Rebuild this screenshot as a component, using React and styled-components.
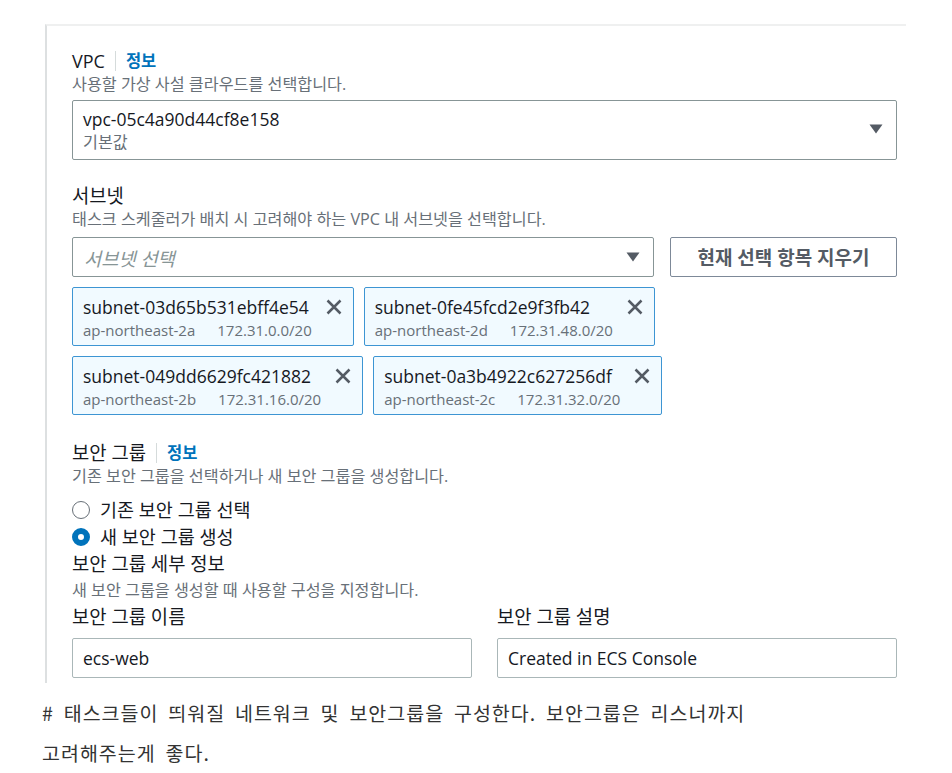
import React from 'react';
import styled, { createGlobalStyle } from 'styled-components';

const GlobalStyle = createGlobalStyle`
  body {
    margin: 0;
    background: #ffffff;
    font-family: "Open Sans", "Noto Sans CJK KR", sans-serif;
    color: #16191f;
  }
`;

const subnets = [
  { id: 'subnet-03d65b531ebff4e54', az: 'ap-northeast-2a', cidr: '172.31.0.0/20' },
  { id: 'subnet-0fe45fcd2e9f3fb42', az: 'ap-northeast-2d', cidr: '172.31.48.0/20' },
  { id: 'subnet-049dd6629fc421882', az: 'ap-northeast-2b', cidr: '172.31.16.0/20' },
  { id: 'subnet-0a3b4922c627256df', az: 'ap-northeast-2c', cidr: '172.31.32.0/20' },
];

function Caret() {
  return (
    <CaretIcon width="14" height="10" viewBox="0 0 14 10">
      <path d="M0.5 0.5 H13.5 L7 9.5 Z" fill="#545b64" />
    </CaretIcon>
  );
}

function Dismiss() {
  return (
    <DismissIcon width="16" height="16" viewBox="0 0 16 16">
      <path d="M1.5 1.5 L14.5 14.5 M14.5 1.5 L1.5 14.5" stroke="#545b64" strokeWidth="2.5" fill="none" />
    </DismissIcon>
  );
}

export default function App() {
  return (
    <Page>
      <GlobalStyle />
      <Panel>
        <Field>
          <LabelRow>
            <Label $latin>VPC</Label>
            <InfoLink>정보</InfoLink>
          </LabelRow>
          <Desc>사용할 가상 사설 클라우드를 선택합니다.</Desc>
          <SelectBox $tall $gap={5}>
            <SelectValue>
              <ValueText>vpc-05c4a90d44cf8e158</ValueText>
              <ValueSub>기본값</ValueSub>
            </SelectValue>
            <Caret />
          </SelectBox>
        </Field>

        <Field $gap={24}>
          <LabelRow>
            <Label>서브넷</Label>
          </LabelRow>
          <Desc>태스크 스케줄러가 배치 시 고려해야 하는 VPC 내 서브넷을 선택합니다.</Desc>
          <SelectRow>
            <SelectBox>
              <Placeholder>서브넷 선택</Placeholder>
              <Caret />
            </SelectBox>
            <ClearButton>현재 선택 항목 지우기</ClearButton>
          </SelectRow>
          <TokenList>
            {subnets.map(s => (
              <Token key={s.id}>
                <TokenBody>
                  <TokenId>{s.id}</TokenId>
                  <TokenMeta>
                    <span>{s.az}</span>
                    <span>{s.cidr}</span>
                  </TokenMeta>
                </TokenBody>
                <Dismiss />
              </Token>
            ))}
          </TokenList>
        </Field>

        <Field $gap={26}>
          <LabelRow>
            <Label>보안 그룹</Label>
            <InfoLink>정보</InfoLink>
          </LabelRow>
          <Desc>기존 보안 그룹을 선택하거나 새 보안 그룹을 생성합니다.</Desc>
          <RadioGroup>
            <RadioRow>
              <RadioCircle />
              <RadioText>기존 보안 그룹 선택</RadioText>
            </RadioRow>
            <RadioRow>
              <RadioCircle $checked />
              <RadioText>새 보안 그룹 생성</RadioText>
            </RadioRow>
          </RadioGroup>
          <SubHeading>보안 그룹 세부 정보</SubHeading>
          <Desc $gap={3}>새 보안 그룹을 생성할 때 사용할 구성을 지정합니다.</Desc>
          <Columns>
            <Column>
              <Label>보안 그룹 이름</Label>
              <TextInput>ecs-web</TextInput>
            </Column>
            <Column>
              <Label>보안 그룹 설명</Label>
              <TextInput>Created in ECS Console</TextInput>
            </Column>
          </Columns>
        </Field>
      </Panel>

      <Note>
        # 태스크들이 띄워질 네트워크 및 보안그룹을 구성한다. 보안그룹은 리스너까지
        <br />
        고려해주는게 좋다.
      </Note>
    </Page>
  );
}

const Page = styled.div`
  width: 952px;
  padding-top: 24px;
`;

/** panel with the light top and left rule */
const Panel = styled.section`
  box-sizing: border-box;
  width: 861px;
  margin-left: 45px;
  border-top: 2px solid #eff0f0;
  border-left: 2px solid #dde0e1;
  padding: 23px 9px 5px 25px;
`;

const Field = styled.div`
  display: flex;
  flex-direction: column;
  margin-top: ${p => p.$gap || 0}px;
`;

const LabelRow = styled.div`
  display: flex;
  align-items: center;
  height: 24px;
`;

const Label = styled.div`
  font-size: ${p => (p.$latin ? 18 : 18.8)}px;
  line-height: 24px;
  color: #16191f;
`;

const InfoLink = styled.a`
  margin-left: 10px;
  padding-left: 10px;
  border-left: 1px solid #d5dbdb;
  font-size: 16.5px;
  line-height: 20px;
  font-weight: 700;
  color: #0073bb;
`;

const Desc = styled.div`
  margin-top: ${p => p.$gap || 0}px;
  font-size: 16.2px;
  line-height: 22px;
  color: #687078;
`;

const SelectBox = styled.div`
  box-sizing: border-box;
  flex: 1;
  display: flex;
  align-items: center;
  justify-content: space-between;
  height: ${p => (p.$tall ? 60 : 40)}px;
  margin-top: ${p => p.$gap || 0}px;
  padding: ${p => (p.$tall ? '5px 13px 7px 10px' : '0 13px 0 11px')};
  border: 1px solid #879596;
  border-radius: 2px;
  background: #ffffff;
`;

const SelectValue = styled.div`
  display: flex;
  flex-direction: column;
  align-self: stretch;
`;

const ValueText = styled.div`
  font-size: 17.5px;
  line-height: 26px;
  color: #16191f;
`;

const ValueSub = styled.div`
  font-size: 16.2px;
  line-height: 20px;
  color: #687078;
`;

const Placeholder = styled.div`
  font-size: 18.7px;
  font-style: italic;
  color: #879596;
`;

const CaretIcon = styled.svg`
  display: block;
  flex-shrink: 0;
`;

const SelectRow = styled.div`
  display: flex;
  gap: 16px;
  margin-top: 7px;
`;

const ClearButton = styled.button`
  box-sizing: border-box;
  width: 227px;
  height: 40px;
  border: 1px solid #7d8998;
  border-radius: 2px;
  background: #ffffff;
  font-family: "Open Sans", "Noto Sans CJK KR", sans-serif;
  font-size: 19px;
  font-weight: 700;
  color: #545b64;
  padding: 0;
`;

const TokenList = styled.div`
  display: flex;
  flex-wrap: wrap;
  gap: 10px;
  margin-top: 10px;
`;

const Token = styled.div`
  box-sizing: border-box;
  display: flex;
  align-items: flex-start;
  height: 59px;
  padding: 6px 11px 5px 10px;
  border: 1px solid #3d95d3;
  border-radius: 2px;
  background: #f1faff;
`;

const TokenBody = styled.div`
  display: flex;
  flex-direction: column;
`;

const TokenId = styled.div`
  font-size: 17.5px;
  line-height: 26px;
  color: #16191f;
`;

const TokenMeta = styled.div`
  display: flex;
  gap: 22px;
  font-size: 15px;
  line-height: 20px;
  color: #687078;
`;

const DismissIcon = styled.svg`
  display: block;
  flex-shrink: 0;
  margin: 5px 0 0 14px;
`;

const RadioGroup = styled.div`
  display: flex;
  flex-direction: column;
  margin-top: 9px;
`;

const RadioRow = styled.label`
  display: flex;
  align-items: center;
  gap: 10px;
  height: 27px;
`;

const RadioCircle = styled.span`
  box-sizing: border-box;
  width: 18px;
  height: 18px;
  border-radius: 50%;
  background: #ffffff;
  border: ${p => (p.$checked ? '6px solid #0073bb' : '1.5px solid #687078')};
`;

const RadioText = styled.span`
  font-size: 18.5px;
  line-height: 24px;
  color: #16191f;
`;

const SubHeading = styled.div`
  margin-top: 2px;
  font-size: 18.8px;
  line-height: 24px;
  color: #16191f;
`;

const Columns = styled.div`
  display: grid;
  grid-template-columns: 1fr 1fr;
  column-gap: 25px;
  margin-top: 4px;
`;

const Column = styled.div`
  display: flex;
  flex-direction: column;
  gap: 9px;
`;

const TextInput = styled.div`
  box-sizing: border-box;
  display: flex;
  align-items: center;
  height: 40px;
  padding: 0 10px;
  border: 1px solid #aab7b8;
  border-radius: 2px;
  font-size: 17.5px;
  color: #16191f;
`;

const Note = styled.p`
  margin: 10px 0 0;
  padding-left: 42px;
  font-family: "Noto Sans CJK KR", sans-serif;
  font-size: 19.5px;
  line-height: 40px;
  letter-spacing: 1px;
  word-spacing: 4.5px;
  color: #333333;
`;
